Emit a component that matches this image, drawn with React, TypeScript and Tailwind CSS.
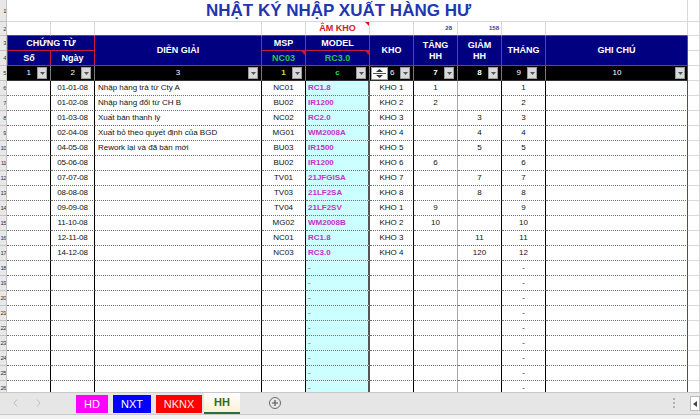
import React from 'react';

type Row = [string, string, string, string, string, string, string, string];

const rows: Row[] = [
  ['01-01-08', 'Nhập hàng trả từ Cty A', 'NC01', 'RC1.8', 'KHO 1', '1', '', '1'],
  ['01-02-08', 'Nhập hàng đổi từ CH B', 'BU02', 'IR1200', 'KHO 2', '2', '', '2'],
  ['01-03-08', 'Xuất bán thanh lý', 'NC02', 'RC2.0', 'KHO 3', '', '3', '3'],
  ['02-04-08', 'Xuất bỏ theo quyết định của BGD', 'MG01', 'WM2008A', 'KHO 4', '', '4', '4'],
  ['04-05-08', 'Rework lại và đã bán mới', 'BU03', 'IR1500', 'KHO 5', '', '5', '5'],
  ['05-06-08', '', 'BU02', 'IR1200', 'KHO 6', '6', '', '6'],
  ['07-07-08', '', 'TV01', '21JFGISA', 'KHO 7', '', '7', '7'],
  ['08-08-08', '', 'TV03', '21LF2SA', 'KHO 8', '', '8', '8'],
  ['09-09-08', '', 'TV04', '21LF2SV', 'KHO 1', '9', '', '9'],
  ['11-10-08', '', 'MG02', 'WM2008B', 'KHO 2', '10', '', '10'],
  ['12-11-08', '', 'NC01', 'RC1.8', 'KHO 3', '', '11', '11'],
  ['14-12-08', '', 'NC03', 'RC3.0', 'KHO 4', '', '120', '12'],
];
for (let i = 0; i < 9; i++) rows.push(['', '', '', '-', '', '', '', '-']);

const Strip = ({ n }: { n: number }) => (
  <div className="flex items-center justify-end overflow-hidden border-r border-b border-[#c4c4c4] bg-[#e8e8e8] text-[6px] leading-none tracking-[-0.6px] text-[#333]">
    <span className="whitespace-nowrap">{n}</span>
  </div>
);

const DD = ({ cls = 'mr-[3px]' }: { cls?: string }) => (
  <span className={`flex h-[12px] w-[10px] shrink-0 items-center justify-center border border-[#9a9a9a] bg-[#d9d9d9] ${cls}`}>
    <svg width="5" height="3" viewBox="0 0 5 3">
      <path d="M0 0H5L2.5 3Z" fill="#555" />
    </svg>
  </span>
);

const Tri = () => (
  <span className="absolute right-0 top-0 h-0 w-0 border-l-[4px] border-t-[4px] border-l-transparent border-t-[#e01010]" />
);

const hd =
  'relative flex items-center justify-center text-center border-r border-b border-[#cc1a44] bg-[#000080] text-[9px] font-bold leading-[11px]';
const fc = 'flex items-center border-r border-b border-r-[#7a7a7a] border-b-[#333] bg-black text-[8px] leading-none text-white';
const dc =
  'flex items-center overflow-hidden whitespace-nowrap border-r border-b border-b-[#6f6f6f] [border-bottom-style:dotted]! text-[8px] leading-none text-[#111]';
const lg = 'border-r border-b border-[#d9d9d9]';

export default function App() {
  return (
    <div className="flex h-[419px] w-[700px] flex-col overflow-hidden bg-white font-['Liberation_Sans',Arial,sans-serif]">
      <div className="h-[392px] overflow-hidden">
        <div className="grid grid-cols-[7px_44px_44px_167px_44px_64px_44px_44px_44px_44px_142px_12px] grid-rows-[22px_14px_15px_15px_15px] auto-rows-[15px]">
          {/* Row 1: title */}
          <Strip n={1} />
          <div className="col-span-10 flex items-center border-r border-b border-[#d9d9d9] pl-[199px]">
            <span className="whitespace-nowrap text-[17px] font-bold leading-none text-[#2236b0]">
              NHẬT KÝ NHẬP XUẤT HÀNG HƯ
            </span>
          </div>
          <div className={lg} />

          {/* Row 2 */}
          <Strip n={2} />
          <div className="border-r border-r-[#d9d9d9] border-b border-b-[#cc1a44]" />
          <div className="border-r border-r-[#d9d9d9] border-b border-b-[#cc1a44]" />
          <div className="border-r border-r-[#d9d9d9] border-b border-b-[#cc1a44]" />
          <div className="border-r border-r-[#d9d9d9] border-b border-b-[#cc1a44]" />
          <div className="relative flex items-center justify-center border-r border-r-[#d9d9d9] border-b border-b-[#cc1a44] text-[9px] font-bold text-[#d42020]">
            ÂM KHO
            <Tri />
          </div>
          <div className="border-r border-r-[#d9d9d9] border-b border-b-[#cc1a44]" />
          <div className="flex items-center justify-end border-r border-r-[#d9d9d9] border-b border-b-[#cc1a44] pr-[5px] text-[6px] font-bold text-[#3a3a9a]">
            28
          </div>
          <div className="flex items-center justify-end border-r border-r-[#d9d9d9] border-b border-b-[#cc1a44] pr-[2px] text-[6px] font-bold text-[#3a3a9a]">
            158
          </div>
          <div className="border-r border-r-[#d9d9d9] border-b border-b-[#cc1a44]" />
          <div className="border-r border-r-[#d9d9d9] border-b border-b-[#cc1a44]" />
          <div className={lg} />

          {/* Row 3 header */}
          <Strip n={3} />
          <div className={`${hd} col-span-2 border-l text-white`}>CHỨNG TỪ</div>
          <div className={`${hd} row-span-2 text-white`}>DIỄN GIẢI</div>
          <div className={`${hd} text-white`}>MSP</div>
          <div className={`${hd} text-white`}>MODEL</div>
          <div className={`${hd} row-span-2 text-white`}>KHO</div>
          <div className={`${hd} row-span-2 text-white`}>
            TĂNG
            <br />
            HH
          </div>
          <div className={`${hd} row-span-2 text-white`}>
            GIẢM
            <br />
            HH
          </div>
          <div className={`${hd} row-span-2 text-white`}>THÁNG</div>
          <div className={`${hd} row-span-2 text-white`}>GHI CHÚ</div>
          <div className={lg} />

          {/* Row 4 header */}
          <Strip n={4} />
          <div className={`${hd} border-l text-white`}>Số</div>
          <div className={`${hd} text-white`}>Ngày</div>
          <div className={`${hd} text-[#22cc44]`}>
            NC03
            <Tri />
          </div>
          <div className={`${hd} text-[#22cc44]`}>
            RC3.0
            <Tri />
          </div>
          <div className={lg} />

          {/* Row 5 filter */}
          <Strip n={5} />
          <div className={`${fc} justify-end`}>
            <span className="mr-[6px]">1</span>
            <DD />
          </div>
          <div className={`${fc} justify-end`}>
            <span className="mr-[6px]">2</span>
            <DD />
          </div>
          <div className={fc}>
            <span className="w-[13px]" />
            <span className="flex-1 text-center">3</span>
            <DD />
          </div>
          <div className={fc}>
            <span className="w-[13px]" />
            <span className="flex-1 text-center font-bold text-[#cde05a]">1</span>
            <DD />
          </div>
          <div className={fc}>
            <span className="w-[13px]" />
            <span className="flex-1 text-center font-bold text-[#22dd44]">c</span>
            <DD />
          </div>
          <div className={fc}>
            <span className="ml-[1px] flex h-[13px] w-[17px] shrink-0 flex-col items-center justify-center border border-[#999] bg-white">
              <svg width="7" height="3" viewBox="0 0 7 3">
                <path d="M0 3H7L3.5 0Z" fill="#333" />
              </svg>
              <span className="my-[1px] h-px w-[13px] bg-[#555]" />
              <svg width="7" height="3" viewBox="0 0 7 3">
                <path d="M0 0H7L3.5 3Z" fill="#333" />
              </svg>
            </span>
            <span className="ml-[2px]">6</span>
            <DD cls="ml-auto mr-[3px]" />
          </div>
          <div className={fc}>
            <span className="w-[13px]" />
            <span className="flex-1 text-center font-bold">7</span>
            <DD />
          </div>
          <div className={fc}>
            <span className="w-[13px]" />
            <span className="flex-1 text-center font-bold">8</span>
            <DD />
          </div>
          <div className={`${fc} justify-end`}>
            <span className="mr-[6px]">9</span>
            <DD cls="mr-[8px]" />
          </div>
          <div className={`${fc} border-r-[#cc1a1a]`}>
            <span className="w-[13px]" />
            <span className="flex-1 text-center">10</span>
            <DD cls="mr-[2px]" />
          </div>
          <div className={lg} />

          {/* Data rows */}
          {rows.map((r, i) => (
            <React.Fragment key={i}>
              <Strip n={i + 6} />
              <div className={`${dc} border-r-black`} />
              <div className={`${dc} justify-center border-r-black text-[7px] tracking-[-0.2px]`}>{r[0]}</div>
              <div className={`${dc} border-r-black pl-[3px]`}>{r[1]}</div>
              <div className={`${dc} justify-center border-r-black`}>{r[2]}</div>
              <div
                className={`${dc} border-r-2 border-r-[#555] bg-[#ccffff] pl-[2px] ${
                  r[3] === '-' ? 'text-[7px] text-[#555]' : 'text-[8.5px] font-bold text-[#c72fc7]'
                }`}
              >
                {r[3]}
              </div>
              <div className={`${dc} justify-center border-r-black`}>{r[4]}</div>
              <div className={`${dc} justify-center border-r-[#aaaaaa]`}>{r[5]}</div>
              <div className={`${dc} justify-center border-r-black`}>{r[6]}</div>
              <div className={`${dc} justify-center border-r-black`}>{r[7]}</div>
              <div className={`${dc} border-r-[#cc1a1a]`} />
              <div className={lg} />
            </React.Fragment>
          ))}
        </div>
      </div>

      {/* Tab bar */}
      <div className="flex h-[23px] items-start border-t border-b border-[#c8c8c8] bg-[#e6e6e6]">
        <div className="flex h-[20px] w-[76px] items-center pl-[13px]">
          <svg width="5" height="8" viewBox="0 0 5 8">
            <path d="M4 0.5L1 4L4 7.5" stroke="#bdbdbd" strokeWidth="1" fill="none" />
          </svg>
          <svg width="5" height="8" viewBox="0 0 5 8" className="ml-[18px]">
            <path d="M1 0.5L4 4L1 7.5" stroke="#bdbdbd" strokeWidth="1" fill="none" />
          </svg>
        </div>
        <div className="mt-[2px] flex h-[18px] w-[32px] items-center justify-center bg-[#ff00ff] text-[11px] text-white">HD</div>
        <div className="ml-[5px] mt-[2px] flex h-[18px] w-[38px] items-center justify-center bg-[#0000ff] text-[11px] text-white">
          NXT
        </div>
        <div className="ml-[5px] mt-[2px] flex h-[18px] w-[46px] items-center justify-center bg-[#ff0000] text-[11px] text-[#ffe8e8]">
          NKNX
        </div>
        <div className="ml-[2px] flex h-[21px] w-[36px] items-center justify-center border-b-2 border-[#217346] bg-gradient-to-b from-white to-[#fdf1d6] text-[11px] font-bold text-[#2f6a22]">
          HH
        </div>
        <div className="ml-[29px] mt-[4px] flex h-[12px] w-[12px] items-center justify-center rounded-full border border-[#6a6a6a]">
          <svg width="6" height="6" viewBox="0 0 6 6">
            <path d="M3 0V6M0 3H6" stroke="#555" strokeWidth="1.2" />
          </svg>
        </div>
        <div className="ml-auto mt-[5px] flex flex-col items-center gap-[2px] pr-[15px]">
          <span className="h-[2px] w-[2px] bg-[#b0b0b0]" />
          <span className="h-[2px] w-[2px] bg-[#b0b0b0]" />
          <span className="h-[2px] w-[2px] bg-[#b0b0b0]" />
        </div>
        <div className="mt-[3px] flex h-[15px] w-[10px] items-center justify-center border border-[#bbb] bg-white">
          <svg width="4" height="6" viewBox="0 0 4 6">
            <path d="M4 0V6L0 3Z" fill="#444" />
          </svg>
        </div>
      </div>
      <div className="flex-1 bg-[#f2f2f2]" />
    </div>
  );
}
